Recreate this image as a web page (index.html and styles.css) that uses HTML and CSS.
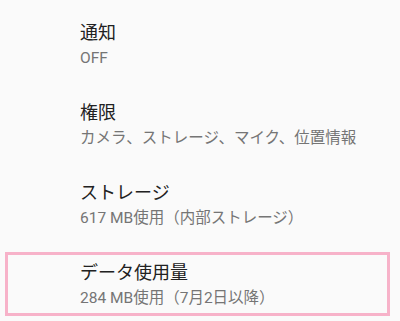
FILE: index.html
```html
<!DOCTYPE html>
<html lang="ja">
<head>
<meta charset="utf-8">
<link rel="stylesheet" href="styles.css">
</head>
<body>
<div class="list">
  <div class="row">
    <div class="title">通知</div>
    <div class="summary">OFF</div>
  </div>
  <div class="row">
    <div class="title">権限</div>
    <div class="summary">カメラ、ストレージ、マイク、位置情報</div>
  </div>
  <div class="row">
    <div class="title">ストレージ</div>
    <div class="summary">617 MB使用（内部ストレージ）</div>
  </div>
  <div class="row highlighted">
    <div class="title">データ使用量</div>
    <div class="summary">284 MB使用（7月2日以降）</div>
    <div class="highlight"></div>
  </div>
</div>
</body>
</html>
```

FILE: styles.css
```css
html, body {
  margin: 0;
  padding: 0;
  background: #fafafa;
  overflow: hidden;
}
body {
  font-family: "Roboto", "Noto Sans CJK JP", sans-serif;
}
.list {
  display: flex;
  flex-direction: column;
  padding-top: 5px;
}
.row {
  position: relative;
  height: 80px;
  box-sizing: border-box;
  padding-left: 80px;
  display: flex;
  flex-direction: column;
  justify-content: center;
}
.title {
  font-size: 18px;
  line-height: 24px;
  color: #212121;
}
.summary {
  font-size: 15.5px;
  line-height: 22px;
  margin-top: 2px;
  color: #757575;
}
.highlight {
  position: absolute;
  top: 7px;
  bottom: 9px;
  left: 5px;
  right: 10px;
  border: 3px solid #f7b2c9;
}
```
